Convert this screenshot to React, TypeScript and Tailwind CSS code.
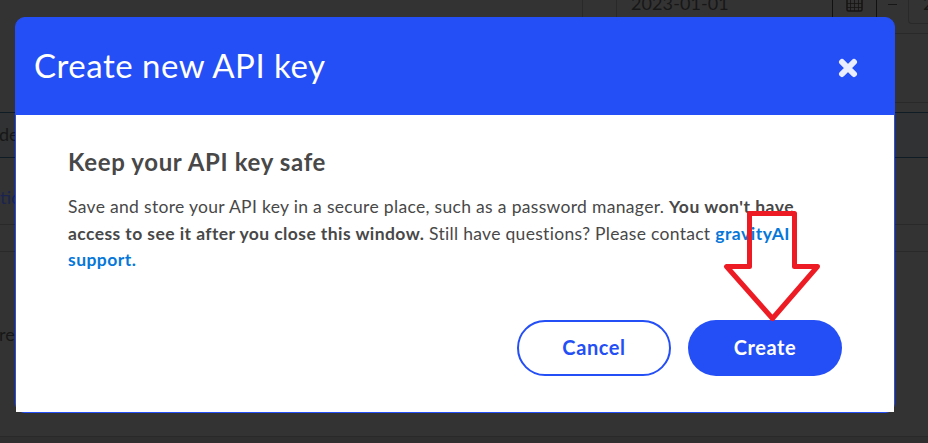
import React from "react";

function CalendarIcon() {
  return (
    <svg width="17" height="19" viewBox="0 0 17 19" fill="none" stroke="#171313" className="mx-auto -mt-[7px] block">
      <rect x="1" y="1" width="15" height="17" rx="1.5" strokeWidth="1.5" />
      <path d="M1 6.5h15M1 10.5h15M1 14.5h15M4.5 6v12M8.5 6v12M12.5 6v12" strokeWidth="0.8" />
    </svg>
  );
}

function Backdrop() {
  return (
    <div className="flex h-full flex-col overflow-hidden bg-[#333333] text-[18px] text-[#171717]">
      <div className="flex h-[103px] shrink-0 justify-end">
        <div className="w-[346px] border-b border-l border-[#292929]">
          <div className="flex h-[34px] border-b border-[#292929]">
            <div className="ml-[33px] h-6 w-[216px] shrink-0 border-l border-[#292929] pl-[14px] leading-[24px]">
              <div className="-mt-[9px] tracking-[0.1px]">2023-01-01</div>
            </div>
            <div className="h-6 w-[45px] shrink-0 border-x border-[#111111]">
              <CalendarIcon />
            </div>
            <div className="mt-1 ml-[11px] h-px w-[9px] shrink-0 bg-[#171717]" />
            <div className="ml-[11px] h-6 w-[40px] shrink-0 rounded-bl-[4px] border-b border-l border-[#292929] pl-[14px] leading-[24px]">
              <div className="-mt-[9px]">2</div>
            </div>
          </div>
        </div>
      </div>
      <div className="h-[9px] shrink-0" />
      <div className="h-[46px] shrink-0 border-y border-[#101c25] bg-[#303233] leading-[42px]">
        <div className="-ml-px">de</div>
      </div>
      <div className="h-[67px] shrink-0 border-b border-[#292929] pt-[26px] leading-[26px] text-[#1b2350]">tio</div>
      <div className="h-[27px] shrink-0 border-b border-[#292929]" />
      <div className="h-[185px] shrink-0 border-b border-[#292929] pt-[69px] leading-[26px]">
        <div className="-ml-px">re</div>
      </div>
      <div className="h-[4px] shrink-0 bg-[#2f2f2f]" />
      <div className="flex-1 bg-[#302e2f]" />
    </div>
  );
}

function CloseIcon() {
  return (
    <svg width="20" height="20" viewBox="0 0 20 20" stroke="#e9edfe">
      <path d="M4.2 4.2 15.8 15.8M15.8 4.2 4.2 15.8" strokeLinecap="square" strokeWidth="4.6" />
      <path d="M4 4 16 16M16 4 4 16" strokeLinecap="round" strokeWidth="6" />
    </svg>
  );
}

export default function App() {
  return (
    <div className="relative h-[443px] w-[928px] overflow-hidden font-['Lato','Open_Sans',sans-serif]">
      <Backdrop />
      <section className="absolute top-[17px] left-[15px] flex h-[396px] w-[880px] flex-col rounded-[10px] border border-[#254ff6] bg-[#254ff6]">
        <header className="flex h-[97px] items-center justify-between pr-[36px] pl-[18px]">
          <h1 className="-mt-[3px] text-[33px] leading-[40px] tracking-[0.5px] whitespace-nowrap text-white">
            Create new API key
          </h1>
          <button aria-label="Close" className="mt-[2px]">
            <CloseIcon />
          </button>
        </header>
        <div className="flex flex-1 flex-col bg-white pr-[52px] pl-[52px] text-[#484848]">
          <h2 className="mt-[31px] text-[24px] leading-[32px] font-bold tracking-[0.65px]">Keep your API key safe</h2>
          <div className="mt-[16px] text-[17.5px] leading-[26.5px] whitespace-nowrap">
            <p className="tracking-[0.32px]">
              Save and store your API key in a secure place, such as a password manager.{" "}
              <b className="tracking-[0.5px]">You won't have</b>
            </p>
            <p className="tracking-[0.3px]">
              <b className="tracking-[0.42px]">access to see it after you close this window.</b> Still have questions?
              Please contact <b className="tracking-[0.5px] text-[#0677d9]">gravityAI</b>
            </p>
            <p className="font-bold tracking-[0.45px] text-[#0677d9]">support.</p>
          </div>
          <div className="mt-auto mb-[36px] flex justify-end gap-[17px] text-[20px] font-bold tracking-[0.6px]">
            <button className="h-[56px] w-[154px] rounded-full border-2 border-[#254ff6] pb-[2px] text-[#254ff6]">
              Cancel
            </button>
            <button className="h-[56px] w-[154px] rounded-full bg-[#254ff6] pb-[2px] text-white">Create</button>
          </div>
        </div>
      </section>
      <svg
        className="pointer-events-none absolute top-[208px] left-[720px]"
        width="105"
        height="116"
        fill="none"
        stroke="#ed1c24"
        strokeWidth="5"
        strokeLinejoin="round"
      >
        <path d="M29.5 5.5H74.5V58.5H97.5L52.5 110.5 6.5 58.5H29.5Z" />
      </svg>
    </div>
  );
}
